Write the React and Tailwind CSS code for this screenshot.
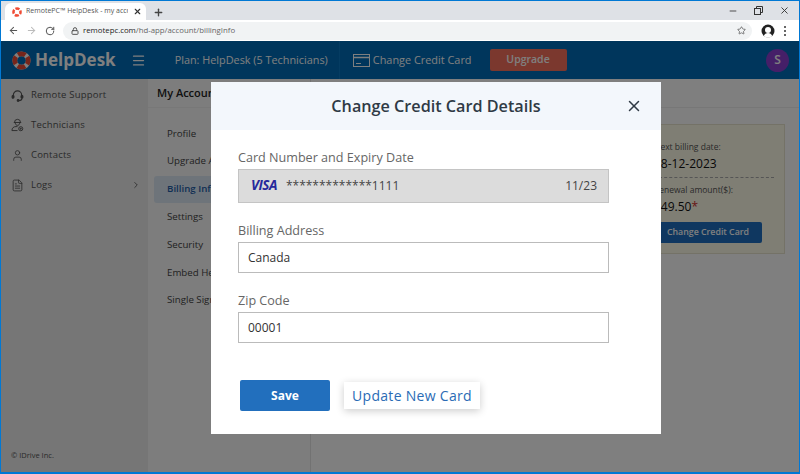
import {
  ArrowLeft,
  ArrowRight,
  RotateCw,
  Lock,
  Star,
  X,
  Plus,
  Minus,
  Menu,
  User,
  FileText,
  ChevronRight,
} from 'lucide-react';

function HeadsetIcon({ className }) {
  return (
    <svg width="13" height="13" viewBox="0 0 14 14" fill="none" stroke="currentColor" strokeWidth="1.2" className={className}>
      <path d="M2.500 9V6.500a4.500 4.500 0 0 1 9 0V9" />
      <rect x="1.200" y="7" width="2" height="3" rx="1" fill="currentColor" />
      <rect x="10.800" y="7" width="2" height="3" rx="1" fill="currentColor" />
      <path d="M11.800 10c0 1.600-1.400 2.500-3.400 2.500" />
      <circle cx="7.600" cy="12.400" r="0.900" fill="currentColor" />
    </svg>
  );
}

function TechnicianIcon({ className }) {
  return (
    <svg width="13" height="14" viewBox="0 0 14 15" fill="none" stroke="currentColor" strokeWidth="1" className={className}>
      <path d="M3.800 4.600a3.200 3.200 0 0 1 6.400 0" />
      <path d="M3 4.800h8" />
      <path d="M4.600 5c0 1.800 1 2.900 2.400 2.900S9.400 6.800 9.400 5" />
      <path d="M1 13.500c0-2.800 1.800-4.300 4.500-4.300h1.500" />
      <path d="M1 13.500h6" />
      <circle cx="10.500" cy="11.500" r="2.200" />
      <circle cx="10.500" cy="11.500" r="0.600" fill="currentColor" />
    </svg>
  );
}

const sideItems = [
  { label: 'Remote Support', icon: <HeadsetIcon className="text-[#555]" /> },
  { label: 'Technicians', icon: <TechnicianIcon className="text-[#555]" /> },
  { label: 'Contacts', icon: <User size={13} strokeWidth={1.5} className="text-[#555]" /> },
  { label: 'Logs', icon: <FileText size={13} strokeWidth={1.5} className="text-[#555]" />, arrow: true },
];

const accountItems = ['Profile', 'Upgrade Account', 'Billing Information', 'Settings', 'Security', 'Embed HelpDesk', 'Single Sign-On'];

function LifeRing({ size, hole = 'none' }) {
  return (
    <svg width={size} height={size} viewBox="0 0 24 24" className="shrink-0">
      <circle cx="12" cy="12" r="5.500" fill={hole} />
      <circle cx="12" cy="12" r="8.500" fill="none" stroke="#fff" strokeWidth="6" />
      <circle cx="12" cy="12" r="8.500" fill="none" stroke="#ef4b35" strokeWidth="6" strokeDasharray="9.850 3.500" strokeDashoffset="4.925" />
    </svg>
  );
}

function BrowserBar() {
  return (
    <div className="shrink-0">
      <div className="flex h-[19px] items-end bg-[#dee1e6] pl-[4px]">
        <div className="flex h-[17px] w-[141px] shrink-0 items-center rounded-t-md bg-white pl-[7px]">
          <LifeRing size={10} />
          <span className="ml-[4px] w-[102px] shrink-0 overflow-hidden whitespace-nowrap text-[7px] text-[#555]">RemotePC™ HelpDesk - my acco</span>
          <X size={9} strokeWidth={3} className="ml-[5px] shrink-0 text-[#333]" />
        </div>
        <Plus size={11} strokeWidth={3} className="mb-[2px] ml-[7px] text-[#444]" />
        <div className="mb-[4px] ml-auto flex items-center gap-[16px] pr-[9px] text-[#333]">
          <Minus size={10} />
          <svg width="9" height="9" viewBox="0 0 9 9" fill="none" stroke="currentColor">
            <path d="M2.500 2.500V.5h6v6h-2" />
            <rect x="0.500" y="2.500" width="6" height="6" />
          </svg>
          <X size={11} />
        </div>
      </div>
      <div className="flex h-[21px] items-center bg-white pl-[7px] pr-[9px]">
        <ArrowLeft size={11} strokeWidth={2.2} className="text-[#555]" />
        <ArrowRight size={11} strokeWidth={2.2} className="ml-[7px] text-[#bbb]" />
        <RotateCw size={10} strokeWidth={2.400} className="ml-[8px] text-[#555]" />
        <div className="ml-[8px] flex h-[18px] w-[689px] items-center rounded-full bg-[#f1f3f4] pl-[8px] pr-[6px]">
          <Lock size={8} strokeWidth={3} className="text-[#555]" />
          <span className="ml-[4px] text-[7.800px] text-[#666]">
            <span className="text-[#222]">remotepc.com</span>/hd-app/account/billingInfo
          </span>
          <Star size={9} strokeWidth={2} className="ml-auto text-[#555]" />
        </div>
        <svg width="14" height="14" viewBox="0 0 14 14" className="ml-[9px]">
          <circle cx="7" cy="7" r="6.500" fill="#222" />
          <circle cx="7" cy="6" r="3" fill="#fff" />
          <path d="M2.800 12c.6-2 2.300-3 4.200-3s3.600 1 4.200 3a6 6 0 0 1-8.400 0z" fill="#fff" />
        </svg>
        <div className="ml-[9px] flex flex-col gap-[2px]">
          <div className="h-[2px] w-[2px] bg-[#666]" />
          <div className="h-[2px] w-[2px] bg-[#666]" />
          <div className="h-[2px] w-[2px] bg-[#666]" />
        </div>
      </div>
    </div>
  );
}

function TopNav() {
  return (
    <div className="flex h-[38px] shrink-0 items-center bg-[#006cb8] pl-[11px]">
      <LifeRing size={19} />
      <span className="ml-[4px] text-[17px] font-bold text-white">HelpDesk</span>
      <Menu size={15} strokeWidth={2} className="ml-[15px] text-white" />
      <span className="ml-[29px] text-[10.850px] text-white">Plan: HelpDesk (5 Technicians)</span>
      <div className="ml-[11px] h-[38px] w-px bg-[#0a78c4]" />
      <svg width="17" height="13" viewBox="0 0 17 13" fill="none" stroke="#fff" className="ml-[13px]">
        <rect x="0.500" y="0.500" width="16" height="12" />
        <path d="M1 3.500h15" strokeWidth="1.500" />
        <path d="M3 9.500h5" />
      </svg>
      <span className="ml-[3px] text-[10.900px] text-white">Change Credit Card</span>
      <div className="ml-[18px] flex h-[22px] w-[77px] items-center justify-center rounded-[2px] bg-[#f7715c] text-[10.500px] font-semibold text-white">Upgrade</div>
      <div className="ml-auto mr-[10px] flex h-[23px] w-[23px] items-center justify-center rounded-full bg-[#8a3fd0] text-[12px] font-semibold text-white">S</div>
    </div>
  );
}

function Sidebar() {
  return (
    <div className="flex w-[147px] shrink-0 flex-col bg-[#ececec] pl-[10px] pt-[1px]">
      {sideItems.map((item) => (
        <div key={item.label} className="flex h-[30px] items-center">
          <div className="flex w-[13px] justify-center">{item.icon}</div>
          <span className="ml-[7px] text-[9.500px] tracking-[0.2px] text-[#555]">{item.label}</span>
          {item.arrow && <ChevronRight size={10} className="ml-[79px] text-[#555]" />}
        </div>
      ))}
      <p className="mt-auto pb-[11px] text-[7.500px] text-[#555]">© IDrive Inc.</p>
    </div>
  );
}

function AccountNav() {
  return (
    <div className="flex w-[163px] shrink-0 flex-col border-r border-[#e4e4e4] bg-[#fafafa]">
      <div className="flex h-[29px] items-center border-b border-[#f0f0f0] pl-[9px] text-[11px] font-semibold text-[#222]">My Account</div>
      <div className="flex flex-col pl-[6px] pt-[12px]">
        {accountItems.map((item, i) => (
          <div
            key={item}
            className={`flex h-[27.800px] items-center whitespace-nowrap rounded-l-[3px] pl-[13px] text-[9.700px] ${
              i === 2 ? 'bg-[#dce8f5] font-semibold text-[#1f5fa8]' : 'text-[#444]'
            }`}
          >
            {item}
          </div>
        ))}
      </div>
    </div>
  );
}

function BillingPanel() {
  return (
    <div className="flex flex-1 flex-col bg-white">
      <div className="h-[29px] border-b border-[#eeeeee]" />
      <div className="ml-[327px] mt-[16px] h-[130px] w-[147px] border border-[#e8e4cf] bg-[#fffce9] pl-[15px] pt-[16px]">
        <p className="text-[8.500px] leading-[12px] text-[#555]">Next billing date:</p>
        <p className="mt-[3px] text-[12px] font-medium leading-[16px] text-[#111]">08-12-2023</p>
        <div className="mt-[5px] w-[120px] border-t border-dashed border-[#aaa]" />
        <p className="mt-[6px] text-[8.500px] leading-[12px] text-[#555]">Renewal amount($):</p>
        <p className="mt-[3px] text-[12px] font-medium leading-[16px] text-[#111]">
          249.50<span className="text-[#d12c2c]">*</span>
        </p>
        <div className="-ml-[10px] mt-[7px] flex h-[21px] w-[118px] items-center justify-center rounded-[2px] bg-[#1f6fc0] pl-[10px] text-[8.800px] font-semibold text-white">Change Credit Card</div>
      </div>
    </div>
  );
}

function CardModal() {
  return (
    <div className="absolute left-[210px] top-[81px] h-[352px] w-[450px] bg-white">
      <div className="relative flex h-[48px] items-center justify-center bg-[#f3f7fc]">
        <h2 className="text-[16.200px] font-semibold text-[#2f3a45]">Change Credit Card Details</h2>
        <X size={18} strokeWidth={2} className="absolute right-[18px] top-[15px] text-[#2f3a45]" />
      </div>
      <div className="px-[27px]">
        <p className="mt-[19px] text-[12.600px] leading-[17px] text-[#666]">Card Number and Expiry Date</p>
        <div className="mt-[3px] flex h-[34px] w-[371px] items-center border border-[#c4c4c4] bg-[#dcdcdc] pl-[12px] pr-[11px]">
          <span className="text-[13.500px] font-bold italic leading-none tracking-[-0.5px] text-[#26289b]">VISA</span>
          <span className="ml-[9px] text-[12px] leading-none text-[#444]">*************1111</span>
          <span className="ml-auto text-[12px] leading-none text-[#444]">11/23</span>
        </div>
        <p className="mt-[19px] text-[12.600px] leading-[17px] text-[#666]">Billing Address</p>
        <div className="mt-[3px] flex h-[31px] w-[371px] items-center border border-[#bbb] pl-[9px] text-[12px] text-[#333]">Canada</div>
        <p className="mt-[19px] text-[12.600px] leading-[17px] text-[#666]">Zip Code</p>
        <div className="mt-[3px] flex h-[31px] w-[371px] items-center border border-[#bbb] pl-[9px] text-[12px] text-[#333]">00001</div>
        <div className="mt-[37px] flex items-center pl-[2px]">
          <div className="flex h-[31px] w-[90px] items-center justify-center rounded-[2px] bg-[#226fbd] text-[12px] font-bold text-white">Save</div>
          <div className="ml-[14px] flex h-[27px] w-[136px] items-center justify-center bg-white text-[14px] tracking-[0.3px] text-[#2a6bb5] shadow-[0_2px_8px_rgba(0,0,0,0.2)]">Update New Card</div>
        </div>
      </div>
    </div>
  );
}

export default function App() {
  return (
    <div className="relative flex h-[474px] w-[800px] flex-col overflow-hidden border-x border-b-2 border-t border-[#0078d4] bg-white font-['Open_Sans',sans-serif]">
      <BrowserBar />
      <div className="relative flex min-h-0 flex-1 flex-col">
        <TopNav />
        <div className="flex min-h-0 flex-1">
          <Sidebar />
          <AccountNav />
          <BillingPanel />
        </div>
        <div className="absolute inset-0 bg-black/50" />
      </div>
      <CardModal />
    </div>
  );
}
